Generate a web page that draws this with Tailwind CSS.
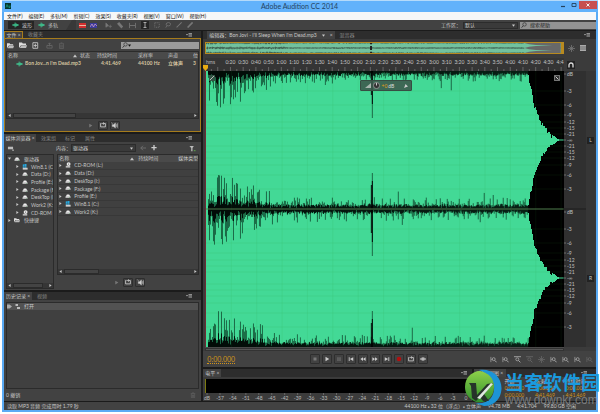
<!DOCTYPE html>
<html lang="en">
<head>
  <meta charset="UTF-8" />
  <meta name="viewport" content="width=device-width, initial-scale=1.0" />
  <title>Adobe Audition CC 2014</title>
  <script src="https://cdn.jsdelivr.net/npm/@tailwindcss/browser@4"></script>
</head>
<body class="bg-white font-['Lato','Noto_Sans_CJK_SC',sans-serif] text-[5px] leading-[8px] text-[#c6c6c6] whitespace-nowrap">

  <!-- Icon sprite -->
  <svg class="hidden">
    <symbol id="menu" viewBox="0 0 6 4"><path d="M0 1h2L1 2.5z M2.5 .2H6v.7H2.5z M2.5 1.5H6v.7H2.5z M2.5 2.8H6v.7H2.5z" fill="#b0b0b0" /></symbol>
    <symbol id="drive" viewBox="0 0 8 8"><path d="M1 4.5 2.5 2h3L7 4.5v2H1z" fill="#eee" /><path d="M1 4.6h6v2H1z" fill="#b5b5b5" /><path d="M5.5 5.2h1v.8h-1z" fill="#3c9a4c" /></symbol>
    <symbol id="win" viewBox="0 0 8 8"><path d="M1 .5 3 .2v2.3H1z M3.4.1 6 0v2.5H3.4z M1 2.9h2v2H1z M3.4 2.9H6v2H3.4z" fill="#25a8e0" /><path d="M1 5h6.500v2.500H1z" fill="#cfcfcf" /></symbol>
    <symbol id="cd" viewBox="0 0 8 8"><circle cx="4.800" cy="2.800" r="2.600" fill="#e8e8e8" /><circle cx="4.800" cy="2.800" r=".7" fill="#555" /><path d="M1 5h6v2.500H1z" fill="#bbb" /></symbol>
    <symbol id="tri" viewBox="0 0 4 4"><path d="M.5 0 3.500 2 .5 4z" fill="#c8c8c8" /></symbol>
    <symbol id="down" viewBox="0 0 4 4"><path d="M0 .8h4L2 3.600z" fill="#c8c8c8" /></symbol>
    <symbol id="up" viewBox="0 0 4 4"><path d="M0 3.200h4L2 .6z" fill="#c8c8c8" /></symbol>
    <symbol id="play" viewBox="0 0 8 8"><path d="M2 1v6l5-3z" fill="currentColor" /></symbol>
    <symbol id="loop" viewBox="0 0 8 8"><path d="M2 2H.8v4.500h6.400V2H4M5 .6 3.300 2 5 3.400" fill="none" stroke="currentColor" stroke-width="1.100" /></symbol>
    <symbol id="speaker" viewBox="0 0 8 8"><path d="M.5.5 2 2.500M1.500 3h1.500l2-1.800v5.600L3 5H1.500z" fill="currentColor" stroke="currentColor" stroke-width=".5" /><path d="M6 2.500v3M7.300 1.500v5" stroke="currentColor" stroke-width=".7" /></symbol>
    <symbol id="stop" viewBox="0 0 8 8"><path d="M2 2h4v4H2z" fill="currentColor" /></symbol>
    <symbol id="pause" viewBox="0 0 8 8"><path d="M2 1.500h1.300v5H2z M4.700 1.500H6v5H4.700z" fill="currentColor" /></symbol>
    <symbol id="first" viewBox="0 0 8 8"><path d="M1 1.500h1.200v5H1z M7 1.500v5L2.500 4z" fill="currentColor" /></symbol>
    <symbol id="last" viewBox="0 0 8 8"><path d="M5.800 1.500H7v5H5.800z M1 1.500v5L5.500 4z" fill="currentColor" /></symbol>
    <symbol id="rew" viewBox="0 0 8 8"><path d="M4 1.500v5L.5 4z M7.500 1.500v5L4 4z" fill="currentColor" /></symbol>
    <symbol id="ffwd" viewBox="0 0 8 8"><path d="M.5 1.500v5L4 4z M4 1.500v5L7.500 4z" fill="currentColor" /></symbol>
    <symbol id="rec" viewBox="0 0 8 8"><circle cx="4" cy="4" r="3" fill="#b01010" /></symbol>
    <symbol id="skip" viewBox="0 0 8 8"><path d="M0 4h8M3 1.800 1 4l2 2.200M5 1.800 7 4 5 6.200M3 4l1-2 1 2-1 2z" fill="none" stroke="currentColor" /></symbol>
    <symbol id="zoomh" viewBox="0 0 8 8"><path d="M1 1v6M1.500 4H3" stroke="currentColor" stroke-width=".8" /><circle cx="4.200" cy="3.600" r="1.700" fill="none" stroke="currentColor" stroke-width=".9" /><path d="M5.400 5 7.500 7.200" stroke="currentColor" stroke-width="1.100" /></symbol>
    <symbol id="zoomt" viewBox="0 0 8 8"><path d="M0 .8h8" stroke="currentColor" /><circle cx="3.800" cy="3.800" r="1.700" fill="none" stroke="currentColor" stroke-width=".9" /><path d="M5 5 7.300 7.300" stroke="currentColor" stroke-width="1.100" /></symbol>
    <symbol id="star" viewBox="0 0 8 8"><path d="M4 0v8M0 4h8M1.500 1.500l5 5M6.500 1.500l-5 5" stroke="currentColor" stroke-width=".9" /></symbol>
    <symbol id="lens" viewBox="0 0 8 8"><circle cx="4.700" cy="3.200" r="2.300" fill="none" stroke="#333" stroke-width=".9" /><path d="M3 5 .8 7.500" stroke="#333" stroke-width="1.200" /></symbol>
    <symbol id="trash" viewBox="0 0 8 8"><path d="M1 2h6M3 1h2M1.800 2.500V7.500h4.400V2.500M3.300 3.500v3M4.700 3.500v3" fill="none" stroke="currentColor" stroke-width=".8" /></symbol>
    <symbol id="wave" viewBox="0 0 9 8"><path d="M0 4h9M2.500 2.800v2.400M4 .8v6.400M5.500 2v4M7 3v2" stroke="#3fd498" stroke-width="1.200" /></symbol>
    <symbol id="folder" viewBox="0 0 8 8"><path d="M0 7V1.500h3l.8 1H7V4H2.200z" fill="#ddd" /><path d="M2.400 4.200H8.200L7 7H.8z" fill="#bbb" /></symbol>
  </svg>

  <div class="flex h-screen min-h-[414px] flex-col border-x-2 border-b-2 border-white">
    <!-- Title bar -->
    <header class="flex h-3 shrink-0 items-start border-t border-[#b4dafa] bg-[#62b2fb] pl-[3px] pr-px text-[#24435f]">
      <svg class="mt-[2px] size-[6px]" viewBox="0 0 6 6"><path d="M0 0h6v6H0z" fill="#04342d" /><path d="M1 4.500 2 1.500l1 3M4 2.500v2h1v-2" fill="none" stroke="#14a38c" stroke-width=".7" /></svg>
      <h1 class="flex-1 pl-[30px] text-center text-[7px] leading-[11px]">Adobe Audition CC 2014</h1>
      <button aria-label="Minimize" class="grid h-2 w-[10px] place-items-center"><svg class="size-[6px]" viewBox="0 0 6 6"><path d="M1 4.500h4" stroke="#24435f" stroke-width="1.200" /></svg></button>
      <button aria-label="Maximize" class="grid h-2 w-[11px] place-items-center"><svg class="size-[6px]" viewBox="0 0 6 6"><path d="M1 1.500h4v3H1z" fill="none" stroke="#24435f" stroke-width=".9" /></svg></button>
      <button aria-label="Close" class="grid h-2 w-[18px] place-items-center bg-[#c75050]"><svg class="size-[4px]" viewBox="0 0 4 4"><path d="M.5.5l3 3M3.500.5l-3 3" stroke="#fff" stroke-width=".9" /></svg></button>
    </header>

    <div class="flex min-h-0 flex-1 flex-col border-x-2 border-b-2 border-[#5aabf5] bg-[#1b1b1b]">
      <!-- Menu -->
      <nav class="flex h-2 shrink-0 gap-[6px] bg-[#f6f7f8] pl-[3px] text-[#111]">
        <button>文件(F)</button><button>编辑(E)</button><button>多轨(M)</button><button>剪辑(C)</button><button>效果(S)</button><button>收藏夹(R)</button><button>视图(V)</button><button>窗口(W)</button><button>帮助(H)</button>
      </nav>

      <!-- Toolbar -->
      <div class="flex h-[10px] shrink-0 items-center bg-[#424242] pl-1">
        <button class="flex h-2 w-[26px] items-center gap-[3px] bg-[#252525] pl-1"><svg class="h-[6px] w-[7px]"><use href="#wave" /></svg>波形</button>
        <button class="flex h-2 w-[26px] items-center gap-[3px] pl-1"><svg class="h-[6px] w-[7px]"><use href="#wave" /></svg>多轨</button>
        <svg class="ml-1 h-[10px] w-3" viewBox="0 0 12 10"><path d="M8 0h4v10H2z" fill="#383838" /></svg>
        <div class="flex items-center gap-1 pl-[3px]">
          <button aria-label="Waveform display"><svg class="h-[5px] w-[7px]" viewBox="0 0 7 5"><path d="M0 0h7v5H0z" fill="#d22f2f" /><path d="M0 2.500h7" stroke="#f3d9c0" stroke-width=".8" /></svg></button>
          <button aria-label="Spectral display"><svg class="h-[5px] w-[7px]" viewBox="0 0 7 5"><path d="M0 0h7v5H0z" fill="#3b3b9a" /><path d="M0 4 2 1l1.500 3L5 1l2 2" fill="none" stroke="#d9a5c8" stroke-width=".7" /></svg></button>
        </div>
        <div class="flex items-center gap-[5px] pl-2 text-[#777]">
          <button aria-label="Move"><svg class="size-[7px]" viewBox="0 0 8 8"><path d="M1 1v5l3-2zM4 5h4M6 3v4" fill="currentColor" stroke="currentColor" stroke-width=".7" /></svg></button>
          <button aria-label="Razor"><svg class="size-[7px]" viewBox="0 0 8 8"><path d="M0 2 2.500 0 7 5 5 7.500z" fill="currentColor" /></svg></button>
          <button aria-label="Slip"><svg class="size-[7px]" viewBox="0 0 8 8"><path d="M.5 1v6M7.500 1v6M1 4h6" stroke="currentColor" /></svg></button>
          <button aria-label="Time selection" class="grid size-2 place-items-center bg-[#252525] text-[#ccc]"><svg class="size-[6px]" viewBox="0 0 8 8"><path d="M2 .7h4M4 .7v6.600M2 7.300h4" stroke="currentColor" /></svg></button>
          <button aria-label="Marquee"><svg class="size-[6px]" viewBox="0 0 8 8"><path d="M1 1h6v6H1z" fill="none" stroke="currentColor" stroke-dasharray="1.500 1" /></svg></button>
          <button aria-label="Lasso"><svg class="size-[6px]" viewBox="0 0 8 8"><ellipse cx="4.500" cy="3" rx="3" ry="2.200" fill="none" stroke="currentColor" /><path d="M2.500 5 1 7.500" stroke="currentColor" /></svg></button>
          <button aria-label="Brush"><svg class="size-[6px]" viewBox="0 0 8 8"><path d="M7.500.5 3 5M3 5 .8 7.300" stroke="currentColor" stroke-width="1.400" /></svg></button>
          <button aria-label="Healing brush"><svg class="size-[6px]" viewBox="0 0 8 8"><path d="M7.500.5.8 7.300" stroke="currentColor" stroke-width="2.200" /></svg></button>
        </div>
        <div class="flex flex-1 items-center justify-end gap-[2px]">
          <label for="workspace">工作区：</label>
          <div class="flex h-[7px] w-[55px] items-center border border-[#2c2c2c] bg-[#3a3a3a] pr-[2px]">
            <select id="workspace" class="h-[6px] min-w-0 flex-1 appearance-none pl-px leading-[6px]"><option>默认</option></select>
            <svg class="size-[3px]"><use href="#down" /></svg>
          </div>
          <label class="flex h-[7px] w-[76px] items-center bg-[#929292] pl-px text-[#222]"><svg class="size-[6px]"><use href="#lens" /></svg><input aria-label="搜索帮助" placeholder="搜索帮助" class="h-[7px] min-w-0 flex-1 pl-[3px] leading-[7px] placeholder:text-[#222]" /></label>
        </div>
      </div>

      <!-- Workspace -->
      <div class="flex min-h-0 flex-1 gap-[2px] pt-px">
        <div class="flex w-1/3 shrink-0 flex-col gap-[2px]">
          <!-- Files -->
          <section class="flex h-[101px] shrink-0 flex-col bg-[#2d2d2d]">
            <div class="flex h-[7px] items-center leading-[7px] text-[#858585]">
              <button class="h-[7px] w-[19px] border-x border-t border-[#a67c1c] bg-[#424242] text-[#c6c6c6]">文件 ×</button>
              <button class="flex-1 pl-[5px] text-left">收藏夹</button>
              <svg class="mr-[9px] h-[4px] w-[6px]"><use href="#menu" /></svg>
            </div>
            <div class="flex flex-1 flex-col border border-[#a67c1c] bg-[#424242] px-px">
              <div class="flex h-3 items-center gap-1 pl-px text-[#c8c8c8]">
                <button aria-label="Open"><svg class="size-[7px]"><use href="#folder" /></svg></button>
                <button aria-label="Import" class="pl-px"><svg class="size-[8px]"><use href="#folder" /></svg></button>
                <button aria-label="New file" class="pl-px"><svg class="size-[7px]" viewBox="0 0 8 8"><path d="M1 .8h5.500v6.400H1zM2 4h3.500M3.800 2v4" fill="none" stroke="currentColor" /></svg></button>
                <button aria-label="Insert" class="pl-[3px] text-[#666]"><svg class="size-[7px]" viewBox="0 0 8 8"><path d="M1 4h6v3H1zM4 5V1M2.500 2.500 4 1l1.500 1.500" fill="none" stroke="currentColor" /></svg></button>
                <button aria-label="Delete" class="pl-px text-[#666]"><svg class="size-[7px]"><use href="#trash" /></svg></button>
                <label class="ml-auto flex h-[7px] w-[78px] items-center bg-[#9b9b9b] pl-px"><svg class="size-[6px]"><use href="#lens" /></svg><svg class="size-[3px]" viewBox="0 0 4 4"><path d="M0 .8h4L2 3.600z" fill="#111" /></svg><input aria-label="Filter files" class="h-[7px] min-w-0 flex-1" /></label>
              </div>
              <div class="flex flex-1 flex-col border border-[#2b2b2b] bg-[#404040]">
                <table class="w-full table-fixed text-left">
                  <colgroup><col class="w-[73px]" /><col class="w-[17px]" /><col class="w-[41px]" /><col class="w-[30px]" /><col class="w-[25px]" /><col /></colgroup>
                  <thead class="bg-[#4a4a4a] leading-[7px]">
                    <tr><th class="pl-px font-normal"><span class="flex items-center justify-between pr-[3px]">名称 <svg class="size-[4px]"><use href="#up" /></svg></span></th><th class="font-normal">状态</th><th class="font-normal">持续时间</th><th class="font-normal">采样率</th><th class="font-normal">声道</th><th class="overflow-hidden font-normal">位</th></tr>
                  </thead>
                  <tbody class="font-bold leading-[9px] text-[#d6c6a0]">
                    <tr><td><span class="flex items-center gap-[2px] pl-[9px]"><svg class="h-[6px] w-[7px] shrink-0"><use href="#wave" /></svg>Bon Jov...n I'm Dead.mp3</span></td><td></td><td class="pl-1">4:41.469</td><td>44100 Hz</td><td>立体声</td><td>3</td></tr>
                  </tbody>
                </table>
                <div class="mt-auto flex h-[5px] items-center justify-between bg-[#363636] px-px"><svg class="size-[3px] rotate-180"><use href="#tri" /></svg><span class="ml-[2px] h-[5px] w-1/3 border border-[#2b2b2b] bg-[#444]"></span><svg class="ml-auto size-[3px]"><use href="#tri" /></svg></div>
              </div>
              <div class="flex h-3 items-center justify-center gap-[2px] text-[#d0d0d0]">
                <button aria-label="Play" class="grid h-2 w-[10px] place-items-center text-[#777]"><svg class="size-[5px]"><use href="#play" /></svg></button>
                <button aria-label="Loop" class="grid h-[9px] w-[10px] place-items-center rounded-[1px] border border-[#2e2e2e]"><svg class="size-[6px]"><use href="#loop" /></svg></button>
                <button aria-label="Auto play" class="grid h-[9px] w-[10px] place-items-center rounded-[1px] border border-[#2e2e2e]"><svg class="size-[7px]"><use href="#speaker" /></svg></button>
              </div>
            </div>
          </section>

          <!-- Media browser -->
          <section class="flex h-[156px] shrink-0 flex-col bg-[#2d2d2d]">
            <div class="flex h-2 items-center text-[#858585]">
              <button class="h-2 w-8 bg-[#424242] text-[#c6c6c6]">媒体浏览器 ×</button>
              <button class="pl-[5px]">效果组</button><button class="pl-[9px]">标记</button><button class="pl-[10px]">属性</button>
              <svg class="mr-[9px] ml-auto h-[4px] w-[6px]"><use href="#menu" /></svg>
            </div>
            <div class="flex min-h-0 flex-1 flex-col bg-[#424242] px-[2px] pb-px">
              <div class="flex h-3 items-center pl-px">
                <svg class="h-[6px] w-[7px]" viewBox="0 0 8 7"><path d="M1 2h6v3H1z" fill="#bbb" /><path d="M6 6h2" stroke="#ddd" /></svg>
                <label for="content" class="pl-[42px]">内容：</label>
                <div class="flex h-2 w-[65px] items-center border border-[#2c2c2c] bg-[#3a3a3a] pr-[2px]">
                  <select id="content" class="h-[7px] min-w-0 flex-1 appearance-none pl-px leading-[7px]"><option>驱动器</option></select>
                  <svg class="size-[3px]"><use href="#down" /></svg>
                </div>
                <svg class="ml-1 size-[6px]" viewBox="0 0 8 8"><path d="M1 4h7M4 1 1 4l3 3" fill="none" stroke="#707070" stroke-width="1.200" /></svg>
                <svg class="ml-[5px] size-[6px]" viewBox="0 0 8 8"><path d="M4 0v7M.5 3.500h7" stroke="#ccc" stroke-width="1.800" /></svg>
                <svg class="mr-[3px] ml-auto size-[7px]" viewBox="0 0 8 8"><path d="M.5 1h5L4 3.500V7H2.500V3.500z" fill="#bbb" /><path d="M5.500 6.500h2" stroke="#5fae4d" /></svg>
              </div>
              <div class="flex min-h-0 flex-1 gap-[3px]">
                <div class="flex w-1/4 flex-col overflow-hidden border border-[#2b2b2b] bg-[#404040]">
                  <ul class="grid h-[69px] grid-rows-9 items-center" id="tree"></ul>
                  <div class="mt-auto flex h-[5px] items-center bg-[#363636] px-px"><svg class="size-[3px] rotate-180"><use href="#tri" /></svg><span class="mx-[2px] h-[5px] w-[30px] border border-[#2b2b2b] bg-[#444]"></span><svg class="ml-auto size-[3px]"><use href="#tri" /></svg></div>
                </div>
                <div class="flex min-w-0 flex-1 flex-col">
                  <div class="flex flex-1 flex-col border border-[#2b2b2b] bg-[#404040]">
                    <div class="flex h-[7px] items-center overflow-hidden bg-[#4a4a4a] pl-px leading-[7px]"><span>名称</span><svg class="ml-auto size-[4px]"><use href="#up" /></svg><span class="w-[44px] pl-1">持续时间</span><span>媒体类型</span></div>
                    <ul class="grid h-[54px] grid-rows-7 items-stretch" id="drives"></ul>
                    <div class="mt-auto flex h-[5px] items-center bg-[#363636] px-px"><svg class="size-[3px] rotate-180"><use href="#tri" /></svg><span class="ml-[2px] h-[5px] w-1/4 border border-[#2b2b2b] bg-[#444]"></span><svg class="ml-auto size-[3px]"><use href="#tri" /></svg></div>
                  </div>
                  <div class="flex h-[14px] items-center justify-center gap-[2px] text-[#d0d0d0]">
                    <button aria-label="Play" class="grid h-2 w-[10px] place-items-center text-[#777]"><svg class="size-[5px]"><use href="#play" /></svg></button>
                    <button aria-label="Loop" class="grid h-[9px] w-[10px] place-items-center rounded-[1px] border border-[#2e2e2e]"><svg class="size-[6px]"><use href="#loop" /></svg></button>
                    <button aria-label="Auto play" class="grid h-[9px] w-[10px] place-items-center rounded-[1px] border border-[#2e2e2e]"><svg class="size-[7px]"><use href="#speaker" /></svg></button>
                  </div>
                </div>
              </div>
            </div>
          </section>

          <!-- History -->
          <section class="flex min-h-0 flex-1 flex-col bg-[#2d2d2d]">
            <div class="flex h-2 items-center text-[#858585]">
              <button class="h-2 w-7 bg-[#424242] text-[#c6c6c6]">历史记录 ×</button>
              <button class="pl-[5px]">视频</button>
              <svg class="mr-[9px] ml-auto h-[4px] w-[6px]"><use href="#menu" /></svg>
            </div>
            <div class="flex flex-1 flex-col bg-[#424242] px-[2px] pt-[2px]">
              <ul class="flex-1 border border-[#2b2b2b] bg-[#404040]">
                <li class="flex h-[7px] items-center gap-[3px] bg-[#525252] leading-[7px]">
                  <svg class="size-[5px]" viewBox="0 0 5 5"><path d="M0 .5h2.500L5 2.500 2.500 4.500H0z" fill="#aaa" /></svg>
                  <svg class="size-[5px]" viewBox="0 0 5 5"><path d="M.5 0h2.500v2H.5z M2 3h3v2H2z" fill="#bbb" /></svg>
                  <span class="pl-px">打开</span>
                </li>
              </ul>
              <div class="flex h-3 items-center justify-between pr-[3px]"><span>0 撤销</span><button aria-label="Delete" class="text-[#666]"><svg class="size-[6px]"><use href="#trash" /></svg></button></div>
            </div>
          </section>
        </div>

        <div class="flex min-w-0 flex-1 flex-col gap-[2px]">
          <!-- Editor -->
          <section class="flex min-h-0 flex-1 flex-col bg-[#3b3b3b]">
            <div class="flex h-2 shrink-0 items-center bg-[#2d2d2d] text-[#858585]">
              <button class="ml-1 flex h-2 items-center gap-[5px] bg-[#424242] px-[2px] text-[#c8c8c8]"><span>编辑器：Bon Jovi - I'll Sleep When I'm Dead.mp3</span><svg class="size-[3px]"><use href="#down" /></svg>×</button>
              <button class="pl-[5px]">混音器</button>
              <svg class="mr-[6px] ml-auto h-[4px] w-[6px]"><use href="#menu" /></svg>
            </div>
            <div class="grid min-h-0 flex-1 grid-cols-[minmax(0,1fr)_32px] grid-rows-[19px_13px_minmax(0,1fr)] pl-[2px]">
              <!-- Overview -->
              <div class="pt-[3px]">
                <svg id="overview" class="h-[12px] w-full border border-r-[3px] border-[#b88a1f] bg-[#72c29e]" viewBox="0 0 360 12" preserveAspectRatio="none"></svg>
              </div>
              <div class="flex items-start gap-[5px] pt-[6px] pl-1 text-[#777]"><svg class="size-[7px]"><use href="#star" /></svg><svg class="size-[6px]" viewBox="0 0 6 6"><path d="M0 0h6v6H0z" fill="#aaa" /><path d="M0 2h6M0 4h6" stroke="#555" stroke-width=".7" /></svg></div>
              <svg id="ruler" class="h-full w-full bg-[#353535]"></svg>
              <div class="pt-[3px] pl-[3px]"><button aria-label="Snap" class="grid size-2 place-items-center bg-[#222]"><svg class="size-[6px]" viewBox="0 0 6 6"><path d="M1 5.500V3a2 2 0 0 1 4 0v2.500" fill="none" stroke="#ddd" stroke-width="1.300" /></svg></button></div>
              <div class="relative min-h-0">
                <svg id="waveform" class="h-full w-full border-l border-[#6d2a35] bg-black" viewBox="0 0 358 276" preserveAspectRatio="none"></svg>
                <!-- Playhead -->
                <svg class="absolute -top-[6px] -left-[2px] h-[6px] w-[5px]" viewBox="0 0 5 6"><path d="M0 0h5v3L2.500 6 0 3z" fill="#e8ab12" /></svg>
                <svg class="absolute top-1 left-1 size-[6px]" viewBox="0 0 6 6"><path d="M0 0h6v6H0z" fill="#335544" /><path d="M1 5 5 1" stroke="#bbb" /></svg>
                <svg class="absolute top-1 right-1 size-[6px]" viewBox="0 0 6 6"><path d="M.4.4h5.200v5.200H.4z" fill="#333" stroke="#aaa" stroke-width=".7" /><path d="M1.500 1.500l3 3" stroke="#ccc" /></svg>
                <!-- Gain HUD -->
                <div class="absolute top-[9px] left-[43%] flex h-[11px] w-[52px] items-center rounded-[1px] border border-[#374d43] bg-[#3d5b4e]/90 pl-1">
                  <svg class="h-[5px] w-[6px]" viewBox="0 0 6 5"><path d="M0 5h6V0z" fill="#a8b5ae" /></svg>
                  <svg class="ml-[2px] size-[7px]" viewBox="0 0 8 8"><circle cx="4" cy="4" r="3.500" fill="#333" stroke="#aaa" stroke-width=".8" /><path d="M4 1v3" stroke="#ddd" /></svg>
                  <span class="pl-[2px] text-[#e0a01c]">+0</span><span class="pl-px text-[#ddd]">dB</span>
                  <svg class="mr-[3px] ml-auto size-[4px]" viewBox="0 0 4 4"><path d="M1.500 0 4 2.500 2.500 3 0 4 1 1.500z" fill="#ccc" /></svg>
                </div>
              </div>
              <div class="flex min-h-0">
                <svg id="decibels" class="h-full min-w-0 flex-1 bg-[#303030]"></svg>
                <div class="flex w-[10px] flex-col justify-around bg-[#363636] pl-px">
                  <button class="grid size-[7px] place-items-center bg-[#222] leading-[7px]">L</button>
                  <button class="grid size-[7px] place-items-center bg-[#222] leading-[7px]">R</button>
                </div>
              </div>
            </div>
            <div class="ml-[2px] mr-8 flex h-1 items-center bg-[#4a4a4a]"><span class="h-[3px] w-full border border-[#333] bg-[#555]"></span></div>
            <!-- Transport -->
            <div class="flex h-[16px] shrink-0 items-center bg-[#424242] pl-1">
              <span class="w-[103px] text-[7px] leading-[8px] text-[#d2941a]"><span class="border-b border-dotted">0:00.000</span></span>
              <div class="flex gap-[2px] text-[#ccc]" id="transport"></div>
              <div class="ml-auto flex gap-[5px] pr-[3px] text-[#aaa]">
                <button aria-label="Zoom in amplitude"><svg class="size-[7px]"><use href="#zoomh" /></svg></button>
                <button aria-label="Zoom out amplitude"><svg class="size-[7px]"><use href="#zoomh" /></svg></button>
                <button aria-label="Zoom in time"><svg class="size-[7px]"><use href="#zoomt" /></svg></button>
                <button aria-label="Zoom out time" class="text-[#666]"><svg class="size-[7px]"><use href="#zoomt" /></svg></button>
                <button aria-label="Zoom reset" class="text-[#666]"><svg class="size-[7px]"><use href="#star" /></svg></button>
                <button aria-label="Zoom to in point"><svg class="size-[7px]"><use href="#zoomh" /></svg></button>
                <button aria-label="Zoom to out point"><svg class="size-[7px]"><use href="#zoomh" /></svg></button>
                <button aria-label="Zoom to selection"><svg class="size-[7px]"><use href="#zoomh" /></svg></button>
                <button aria-label="Zoom full" class="text-[#666]"><svg class="size-[7px]"><use href="#zoomh" /></svg></button>
              </div>
            </div>
          </section>

          <div class="flex h-8 shrink-0 gap-[2px]">
            <!-- Levels -->
            <section class="flex flex-[2.2] flex-col bg-[#3b3b3b]">
              <div class="flex h-2 items-center bg-[#2d2d2d]"><button class="h-2 w-[18px] bg-[#424242]">电平 ×</button><svg class="mr-[5px] ml-auto h-[4px] w-[6px]"><use href="#menu" /></svg></div>
              <div class="mx-[2px] mt-[2px] h-[14px] border-l border-[#7d7a10] bg-black"></div>
              <svg id="levels" class="h-[8px] w-full"></svg>
            </section>
            <!-- Selection / view -->
            <section class="flex-1 bg-[#3f3f3f] text-[#d2941a]">
              <div class="flex h-2 items-center bg-[#2d2d2d] text-[#c6c6c6]"><button class="h-2 w-8 bg-[#424242]">选区/视图 ×</button><svg class="mr-[9px] ml-auto h-[4px] w-[6px]"><use href="#menu" /></svg></div>
              <table class="mt-px w-full table-fixed leading-[7px]">
                <tr class="text-[#c6c6c6]"><td></td><td>开始</td><td>结束</td><td>持续时间</td></tr>
                <tr><th class="pl-[2px] text-left font-normal text-[#c6c6c6]">选区</th><td>0:00.000</td><td>0:00.000</td><td>0:00.000</td></tr>
                <tr><th class="pl-[2px] text-left font-normal text-[#c6c6c6]">视图</th><td>0:00.000</td><td>4:41.469</td><td>4:41.469</td></tr>
              </table>
            </section>
          </div>
        </div>
      </div>

      <!-- Status bar -->
      <footer class="mt-px flex h-2 shrink-0 items-center justify-between bg-[#424242] pr-5 pl-[3px]">
        <span>读取 MP3 音频 完成用时 1.79 秒</span>
        <div class="flex gap-[7px]"><span>44100 Hz <span class="text-[3px]">●</span> 32 位（浮点）<span class="text-[3px]">●</span> 立体声</span><span>94.78 MB</span><span>4:41.704</span><span>99.80 GB 空闲</span></div>
      </footer>
    </div>
  </div>

  <!-- Site badge -->
  <div class="absolute right-0 bottom-[7px] flex items-center gap-[3px] font-['Liberation_Sans','Noto_Sans_CJK_SC',sans-serif]">
    <svg class="h-[38px] w-[37px]" viewBox="0 0 37 38">
      <defs>
        <linearGradient id="leaf" x1="0" y1="0" x2="0" y2="1"><stop offset="0" stop-color="#8ed04a" /><stop offset="1" stop-color="#2e8f2c" /></linearGradient>
      </defs>
      <path d="M14 1C27-1 37 8 36.500 20 36 30 29 37 19 37L10 34C23 36 30 28 29 17 28 9 22 4 14 1z" fill="#1d94d6" />
      <path d="M14 2C23 3 29 9 29 18 29 28 21 35 11 33 4 30 0 25 0 18 0 9 6 3 14 2z" fill="url(#leaf)" />
      <path d="M4 14h7l1 12 10-11 6-1-9 11 5 7h-6l-3-4-4 4-4-3-1-12z" fill="#26332a" />
      <path d="M12 29 26 14l2 1-13 15z" fill="#dfe9e0" />
    </svg>
    <div class="pt-1">
      <p class="text-[19px] leading-[20px] font-bold text-[#1a9ade]">当客软件园</p>
      <p class="text-[12px] leading-[12px] text-[#8a8d90]/80">www.downkr.com</p>
    </div>
  </div>

  <script>
    const el = (id) => document.getElementById(id);
    const icon = (name) => `<svg class="size-[6px] shrink-0"><use href="#${name}" /></svg>`;
    const arrow = (name) => `<svg class="size-[3px] shrink-0"><use href="#${name}" /></svg>`;

    // Drives
    const tree = [["win", "Win8.1 (C:)"], ["drive", "Data (D:)"], ["drive", "Profile (E:)"], ["drive", "Package (F:)"], ["drive", "DeskTop (I:)"], ["drive", "Work2 (K:)"], ["cd", "CD-ROM (L:)"]];
    const list = [["cd", "CD-ROM (L:)"], ["drive", "Data (D:)"], ["drive", "DeskTop (I:)"], ["drive", "Package (F:)"], ["drive", "Profile (E:)"], ["win", "Win8.1 (C:)"], ["drive", "Work2 (K:)"]];
    const root = (a, i, label) => `<li class="flex items-center gap-[3px] pl-px">${arrow(a)}${icon(i)}<span class="pl-px">${label}</span></li>`;
    el("tree").innerHTML = root("down", "drive", "驱动器")
      + tree.map(([i, t]) => `<li class="flex items-center gap-[3px] pl-[9px]">${arrow("tri")}${icon(i)}${t}</li>`).join("")
      + root("tri", "folder", "快捷键");
    el("drives").innerHTML = list.map(([i, t]) => `<li class="flex items-center gap-[3px] border-b border-[#383838] pl-px">${arrow("tri")}${icon(i)}<span>${t}</span></li>`).join("");

    // Transport buttons
    el("transport").innerHTML = ["stop", "play", "pause", "first", "rew", "ffwd", "last", "rec", "loop", "skip"].map((n) =>
      `<button aria-label="${n}" class="grid size-[10px] place-items-center rounded-[1px] border border-[#2e2e2e] ${n === "stop" || n === "pause" ? "text-[#777]" : ""}"><svg class="size-[6px]"><use href="#${n}" /></svg></button>`).join("");

    // Time ruler, 4:42 long
    const total = 282;
    let out = `<text x="1" y="6" fill="#bbb" font-size="5">hms</text>`;
    for (let t = 0; t < total; t += 5) {
      const x = t / total * 100;
      out += `<line x1="${x}%" x2="${x}%" y1="${t % 10 ? 11 : 9}" y2="13" stroke="#888" stroke-width=".6" />`;
      if (t >= 20 && t % 10 === 0 && t < 280) out += `<text x="${x}%" y="6" text-anchor="middle" fill="#c6c6c6" font-size="5">${Math.floor(t / 60)}:${String(t % 60).padStart(2, "0")}</text>`;
    }
    out += `<text x="100%" y="6" text-anchor="end" fill="#c6c6c6" font-size="5">4:4</text>`;
    el("ruler").innerHTML = out;

    // Decibel scale for both channels
    const marks = [["-3", 20], ["-6", 34], ["-9", 44], ["-12", 51], ["-15", 57], ["-21", 63]];
    out = "";
    [0, 138].forEach((top) => {
      const put = (label, y) => {
        const p = (top + y) / 276 * 100;
        out += `<line x1="0" x2="2" y1="${p}%" y2="${p}%" stroke="#999" stroke-width=".6" /><text x="3" y="${p}%" dy="2" fill="#c0c0c0" font-size="5">${label}</text>`;
      };
      put("dB", 3);
      marks.forEach(([l, y]) => { put(l, y); put(l, 138 - y); });
      put("-∞", 69);
    });
    out += `<line x1="0" x2="100%" y1="50%" y2="50%" stroke="#1c1c1c" />`;
    el("decibels").innerHTML = out;

    // Level scale
    out = "";
    for (let i = 0; i <= 20; i++) {
      const x = 1.5 + i * 4.82;
      out += `<line x1="${x}%" x2="${x}%" y1="0" y2="2" stroke="#888" stroke-width=".6" /><text x="${x}%" y="7" text-anchor="middle" fill="#bbb" font-size="5">${i ? i * 3 - 60 : "dB"}</text>`;
    }
    el("levels").innerHTML = out;

    // Waveform
    let seed = 11;
    const rnd = () => (seed = (seed * 16807) % 2147483647) / 2147483647;
    const lerp = (pts, x) => {
      for (let i = 1; i < pts.length; i++) if (x <= pts[i][0]) {
        const [a, b] = [pts[i - 1], pts[i]];
        return a[1] + (b[1] - a[1]) * (x - a[0]) / (b[0] - a[0]);
      }
      return 0;
    };
    const tail = [[0, 69], [321, 69], [324, 56], [326, 47], [328, 35], [331, 28], [335, 19], [339, 13], [345, 6], [350, 2], [353, 0], [358, 0]];
    const spikes = [[0, 36], [10, 36], [24, 32], [46, 27], [58, 19], [75, 12], [140, 11], [322, 9], [358, 9]];
    let green = "", black = "", shade = "";
    [0, 138].forEach((top) => {
      for (let x = 0; x < 353; x++) {
        [1, -1].forEach((dir) => {
          const edge = top + (dir === 1 ? 0 : 138);
          const amp = Math.max(0.5, lerp(tail, x) - (x > 322 && x < 346 ? rnd() * 4 : 0));
          green += `M${x} ${top + 69}h1v${-dir * amp}h-1z`;
          if (x > 322 || x < 2) return;
          const far = lerp(spikes, x);
          const r = rnd();
          const long = x < 50 ? far * (0.15 + 0.85 * r * r) : far * (0.15 + 0.85 * r * r * r);
          const jump = x > 75 && rnd() > 0.98 ? 8 : 0;
          shade += `M${x + 0.5} ${edge}v${dir * (long + jump + 1.5)}`;
          black += `M${x + 0.5} ${edge}v${dir * Math.max(1 + rnd() * (x < 50 ? 6 : 4), long * 0.4)}`;
        });
      }
      shade += `M166.500 ${top}v47M166.500 ${top + 138}v-36`;
      black += `M165.500 ${top}v24M166.500 ${top}v33M165.500 ${top + 138}v-24M166.500 ${top + 138}v-28`;
    });
    let grid = "";
    for (let t = 20; t < total; t += 20) grid += `M${t / total * 358} 0v276`;
    [0, 138].forEach((top) => marks.forEach(([, y]) => { grid += `M0 ${top + y}h358M0 ${top + 138 - y}h358`; }));
    el("waveform").innerHTML = `<path d="${green}" fill="#43d996" shape-rendering="crispEdges" /><path d="${shade}" stroke="#08301d" stroke-opacity=".66" /><path d="${black}" stroke="#000" stroke-opacity=".9" />
      <path d="${grid}" stroke="#2f9a3a" stroke-opacity=".16" stroke-width=".6" fill="none" /><path d="M0 138h358" stroke="#4e7d4c" /><path d="M353 69h5M353 207h5" stroke="#43d996" />`;

    // Overview strip
    let mini = "";
    for (let x = 0; x < 325; x++) {
      const h = x < 80 ? 1.6 : 0.9;
      mini += `M${x + 0.5} 0v${rnd() * h}M${x + 0.5} ${6 - rnd() * h}V${6 + rnd() * h}M${x + 0.5} 12v${-rnd() * h}`;
    }
    el("overview").innerHTML = `<path d="M0 6h360" stroke="#55806b" /><path d="${mini}" stroke="#3c5a4c" /><path d="M167.500 0v1.500M167.500 3.500v5M167.500 10.500v1.500" stroke="#222" stroke-width="2" />
      <path d="M324 0H360V12H324z" fill="#686868" /><path d="M323 0 328 1.500 335 2.500 352 3 335 3.600 328 4.600 323 6z M323 6 328 7.400 335 8.400 352 9 335 9.600 328 10.600 323 12z" fill="#72c29e" />`;
  </script>
</body>
</html>
